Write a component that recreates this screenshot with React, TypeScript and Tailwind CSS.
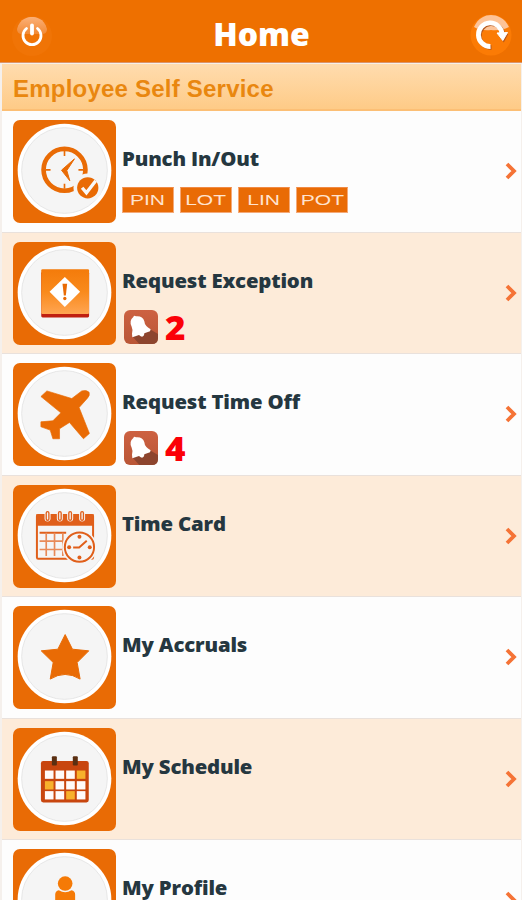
import React from 'react';

interface MenuItem {
  title: string;
  icon: React.ReactNode;
  actions?: string[];
  alerts?: number;
}

function PunchIcon() {
  return (
    <>
      <circle cx="155" cy="150" r="63" fill="none" stroke="#e96b05" strokeWidth="14" />
      <path d="M155 93v15M155 192v15M98 150h15M197 150h15" stroke="#e96b05" strokeWidth="5" />
      <path d="M185 117 146 151 171 183 162 152Z" fill="#e96b05" stroke="#e96b05" strokeWidth="3" />
      <circle cx="225" cy="204" r="43" fill="#f5f5f5" />
      <circle cx="225" cy="204" r="32" fill="#e96b05" />
      <path d="m208 204 13 15 28-36" fill="none" stroke="#f8f8f8" strokeWidth="10" />
    </>
  );
}

function ExceptionIcon() {
  return (
    <>
      <defs>
        <linearGradient id="exception" x1="0" y1="0" x2="0" y2="1">
          <stop offset="0" stopColor="#f47b0a" />
          <stop offset="0.5" stopColor="#f98a1c" />
          <stop offset="1" stopColor="#ffa552" />
        </linearGradient>
      </defs>
      <rect x="85" y="90" width="144" height="137" rx="4" fill="#c01f10" />
      <rect x="85" y="82" width="144" height="135" rx="4" fill="url(#exception)" />
      <path d="m156 105 46 45-46 46-46-46Z" fill="#fff" />
      <path d="M149 126h14l-4 35h-6Z" fill="#e96b05" />
      <circle cx="156" cy="170" r="5" fill="#e96b05" />
    </>
  );
}

function PlaneIcon() {
  return (
    <path
      d="M102 84 177 107 207 84Q222 80 229 88 232 98 224 106L199 134 230 212 212 228 170 179 140 198V228H120L112 202 84 192V177L120 174 144 150 84 101Z"
      fill="#e96b05"
      stroke="#e96b05"
      strokeWidth="2"
      strokeLinejoin="round"
    />
  );
}

function TimeCardIcon() {
  return (
    <>
      <rect x="72" y="90" width="169" height="132" rx="4" fill="#f5f5f5" stroke="#e05f1a" strokeWidth="6" />
      <path d="M70 88h173v35H70Z" fill="#e05f1a" />
      {[104, 141, 172, 208].map((x) => (
        <g key={x}>
          <rect x={x - 9} y="76" width="18" height="34" rx="9" fill="#f5f5f5" />
          <rect x={x - 4} y="80" width="8" height="26" rx="4" fill="#f5f5f5" stroke="#e05f1a" strokeWidth="4" />
        </g>
      ))}
      <path d="M80 144h80" stroke="#e05f1a" strokeWidth="6" />
      <path d="M80 169h74M80 194h74M100 144v70M125 144v70M150 144v70" stroke="#e88a58" strokeWidth="5" />
      <circle cx="200" cy="187" r="52" fill="#f5f5f5" />
      <circle cx="200" cy="187" r="44" fill="#f5f5f5" stroke="#e05f1a" strokeWidth="6" />
      <path d="M181 188h18l23-20" fill="none" stroke="#e05f1a" strokeWidth="6" />
      <g fill="#e05f1a">
        <circle cx="200" cy="156" r="6" />
        <circle cx="200" cy="218" r="6" />
        <circle cx="169" cy="187" r="6" />
        <circle cx="231" cy="187" r="6" />
      </g>
    </>
  );
}

function StarIcon() {
  return (
    <path
      d="m157 86 22 44 49 5-35 35 9 50Q157 192 112 220l9-50-36-35 50-5Z"
      fill="#e96b05"
      stroke="#e96b05"
      strokeWidth="3"
      strokeLinejoin="round"
    />
  );
}

function ScheduleIcon() {
  const marked = ['3-0', '0-1', '2-2'];
  return (
    <>
      <rect x="84" y="99" width="144" height="125" rx="7" fill="#c8460f" />
      {[128, 160, 190].map((y, row) =>
        [96, 128, 160, 192].map((x, col) => (
          <rect
            key={`${x}-${y}`}
            x={x}
            y={y}
            width="26"
            height="25"
            fill={marked.includes(`${col}-${row}`) ? '#f7b12c' : '#fffafa'}
          />
        ))
      )}
      <rect x="117" y="85" width="15" height="28" rx="3" fill="#5b2f12" />
      <rect x="180" y="85" width="15" height="28" rx="3" fill="#5b2f12" />
    </>
  );
}

function ProfileIcon() {
  return (
    <g fill="#f57a06">
      <circle cx="157" cy="104" r="22" />
      <path d="M127 230V137q0-11 11-13 19 12 38 0 11 2 11 13v93Z" />
    </g>
  );
}

const items: MenuItem[] = [
  { title: 'Punch In/Out', icon: <PunchIcon />, actions: ['PIN', 'LOT', 'LIN', 'POT'] },
  { title: 'Request Exception', icon: <ExceptionIcon />, alerts: 2 },
  { title: 'Request Time Off', icon: <PlaneIcon />, alerts: 4 },
  { title: 'Time Card', icon: <TimeCardIcon /> },
  { title: 'My Accruals', icon: <StarIcon /> },
  { title: 'My Schedule', icon: <ScheduleIcon /> },
  { title: 'My Profile', icon: <ProfileIcon /> },
];

function IconTile({ children }: { children: React.ReactNode }) {
  return (
    <div className="h-[103px] w-[103px] shrink-0 overflow-hidden rounded-[7px] bg-[#e96b05]">
      <svg viewBox="0 0 310 310" className="block h-full w-full">
        <circle cx="155" cy="152" r="141" fill="#fff" />
        <circle cx="155" cy="152" r="129" fill="#f5f5f5" stroke="#e6e6e6" strokeWidth="3" />
        {children}
      </svg>
    </div>
  );
}

function BellBadge() {
  return (
    <svg viewBox="0 0 102 102" className="block h-[34px] w-[34px]">
      <defs>
        <linearGradient id="bell" x1="0" y1="0" x2="0" y2="1">
          <stop offset="0" stopColor="#cd6141" />
          <stop offset="1" stopColor="#b95636" />
        </linearGradient>
      </defs>
      <rect width="102" height="102" rx="18" fill="url(#bell)" />
      <path d="m78 58 24 14v12q0 18-18 18H46L26 80Z" fill="#8d452e" />
      <path
        d="M28 21q2-6 8-2 20-2 25 15 1 14 19 24l-2 6-17 6q-1 13-11 9l-5-4-20 7-1-11q4-10-1-21-9-18 5-29Z"
        fill="#fff"
      />
    </svg>
  );
}

function MenuRow({ item, shaded }: { item: MenuItem; shaded: boolean }) {
  return (
    <li
      className={`flex h-[121.5px] border-b border-[#e9e1dc] pt-[9px] pr-[4px] pl-[11px] ${
        shaded ? 'bg-[#fdebd9]' : 'bg-[#fdfdfd]'
      }`}
    >
      <IconTile>{item.icon}</IconTile>
      <div className="ml-[6px] flex-1 pt-[25px]">
        <h2 className="origin-left scale-x-[1.07] font-['Open_Sans','Noto_Sans',sans-serif] text-[19px] leading-[28px] font-extrabold tracking-[-0.15px] whitespace-nowrap text-[#253740]">
          {item.title}
        </h2>
        {item.actions && (
          <div className="mt-[14px] flex gap-[6px]">
            {item.actions.map((action) => (
              <button
                key={action}
                className="flex h-[26px] w-[52px] items-center justify-center border border-[#f4a978] border-t-[#f08a45] bg-[#e96b05] font-['Liberation_Sans',sans-serif] text-[15px] text-[#ffe3cf]"
              >
                <span className="inline-block scale-x-[1.4]">{action}</span>
              </button>
            ))}
          </div>
        )}
        {item.alerts && (
          <div className="mt-[15px] ml-[2px] flex h-[34px] items-center gap-[7px]">
            <BellBadge />
            <span className="origin-left scale-x-[1.03] font-['Open_Sans','Noto_Sans',sans-serif] text-[34px] leading-[34px] font-extrabold text-[#fb0007]">
              {item.alerts}
            </span>
          </div>
        )}
      </div>
      <svg viewBox="0 0 12 20" className="mt-[41px] block h-[20px] w-[12px]">
        <path d="m2 3 7 7-7 7" fill="none" stroke="#f57336" strokeWidth="3.8" />
      </svg>
    </li>
  );
}

function PowerButton() {
  return (
    <button aria-label="Log out">
      <svg viewBox="0 0 42 42" className="block h-[42px] w-[42px]">
        <defs>
          <linearGradient id="gloss" x1="0" y1="0" x2="0" y2="1">
            <stop offset="0" stopColor="#fbb078" />
            <stop offset="1" stopColor="#f28a35" />
          </linearGradient>
        </defs>
        <circle cx="21" cy="22" r="20" fill="#f07406" />
        <path d="M6 15C9 4 17 3 21 3s12 1 15 12q0 5-5 5H11q-5 0-5-5Z" fill="url(#gloss)" />
        <path d="M15.5 14.5a9 9 0 1 0 11 0" fill="none" stroke="#fff" strokeWidth="2.8" strokeLinecap="round" />
        <path d="M21 11.5v8" stroke="#fff" strokeWidth="3.8" strokeLinecap="round" />
      </svg>
    </button>
  );
}

function RefreshButton() {
  return (
    <button aria-label="Refresh">
      <svg viewBox="0 0 42 42" className="block h-[42px] w-[42px]">
        <circle cx="21" cy="21" r="20.5" fill="#fb7b05" />
        <path d="M4 13C8 4 15 1 21 1s14 3 18 12q-8 4-18 3-10 1-17-3Z" fill="#fdc397" />
        <path d="M20.5 32.5A11.8 11.8 0 1 1 32 19" transform="translate(1 1)" fill="none" stroke="#b4571c" strokeWidth="4.3" />
        <path d="m27 19 10.5 0-4.5 8.5Z" transform="translate(.8 1)" fill="#b4571c" />
        <path d="M20.5 32.5A11.8 11.8 0 1 1 32 20" fill="none" stroke="#fff" strokeWidth="4.8" />
        <path d="m27 19 10.5-.5-4.7 8Z" fill="#fff" stroke="#fff" strokeLinejoin="round" />
      </svg>
    </button>
  );
}

export default function App() {
  return (
    <div className="h-[900px] w-[522px] overflow-hidden bg-[#f5f0ec]">
      <header className="flex h-[63px] items-center justify-between border-b border-[#dc9468] bg-[#ee7000] pt-[7px] pr-[10px] pl-[11px]">
        <PowerButton />
        <h1 className="pb-px font-['Open_Sans','Noto_Sans',sans-serif] text-[32px] leading-[40px] font-extrabold text-white">
          Home
        </h1>
        <RefreshButton />
      </header>
      <main className="pt-px pr-px pl-[2px]">
        <div className="flex h-[47px] items-center border-b-2 border-[#fcbf75] bg-gradient-to-b from-[#ffdcae] to-[#fecb87] pt-[4px] pl-[11px] font-['Liberation_Sans',sans-serif] text-[24px] font-bold tracking-[0.22px] text-[#e9870f]">
          Employee Self Service
        </div>
        <ul>
          {items.map((item, index) => (
            <MenuRow key={item.title} item={item} shaded={index % 2 === 1} />
          ))}
        </ul>
      </main>
    </div>
  );
}
